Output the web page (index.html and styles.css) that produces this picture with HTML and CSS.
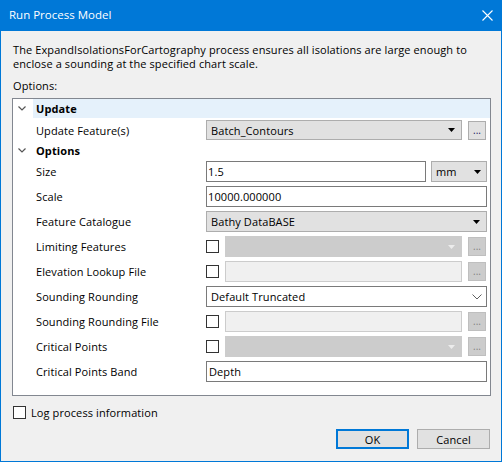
FILE: index.html
```html
<!DOCTYPE html>
<html>
<head>
<meta charset="utf-8">
<link rel="stylesheet" href="styles.css">
</head>
<body>
<div class="window">
  <div class="titlebar">
    <span class="title">Run Process Model</span>
    <svg class="close" width="11" height="11" viewBox="0 0 11 11"><path d="M0.5 0.5 L10.5 10.5 M10.5 0.5 L0.5 10.5" stroke="#fff" stroke-width="1.1" fill="none"/></svg>
  </div>
  <div class="content">
    <p class="desc">The ExpandIsolationsForCartography process ensures all isolations are large enough to<br>enclose a sounding at the specified chart scale.</p>
    <div class="options-label">Options:</div>
    <div class="grid">
      <div class="cat cat-update selected">
        <span class="gutter"><svg width="8" height="5" viewBox="0 0 8 5"><path d="M0.5 0.5 L4 4 L7.5 0.5" stroke="#555" stroke-width="1.2" fill="none"/></svg></span>
        <span class="cat-name">Update</span>
      </div>
      <div class="row row-first">
        <span class="label">Update Feature(s)</span>
        <div class="value">
          <div class="combo"><span>Batch_Contours</span><svg class="arrow" width="7" height="4" viewBox="0 0 7 4"><path d="M0 0 H7 L3.5 4 Z" fill="#000"/></svg></div>
          <div class="dots">...</div>
        </div>
      </div>
      <div class="cat cat-options">
        <span class="gutter"><svg width="8" height="5" viewBox="0 0 8 5"><path d="M0.5 0.5 L4 4 L7.5 0.5" stroke="#555" stroke-width="1.2" fill="none"/></svg></span>
        <span class="cat-name">Options</span>
      </div>
      <div class="row">
        <span class="label">Size</span>
        <div class="value gap5">
          <div class="text"><span>1.5</span></div>
          <div class="combo unit"><span>mm</span><svg class="arrow" width="7" height="4" viewBox="0 0 7 4"><path d="M0 0 H7 L3.5 4 Z" fill="#000"/></svg></div>
        </div>
      </div>
      <div class="row">
        <span class="label">Scale</span>
        <div class="value"><div class="text"><span>10000.000000</span></div></div>
      </div>
      <div class="row">
        <span class="label">Feature Catalogue</span>
        <div class="value"><div class="combo"><span>Bathy DataBASE</span><svg class="arrow" width="7" height="4" viewBox="0 0 7 4"><path d="M0 0 H7 L3.5 4 Z" fill="#000"/></svg></div></div>
      </div>
      <div class="row">
        <span class="label">Limiting Features</span>
        <div class="value">
          <span class="check"></span>
          <div class="combo disabled"><span></span><svg class="arrow" width="7" height="4" viewBox="0 0 7 4"><path d="M0 0 H7 L3.5 4 Z" fill="#ececec"/></svg></div>
          <div class="dots disabled">...</div>
        </div>
      </div>
      <div class="row">
        <span class="label">Elevation Lookup File</span>
        <div class="value">
          <span class="check"></span>
          <div class="text disabled"></div>
          <div class="dots disabled">...</div>
        </div>
      </div>
      <div class="row">
        <span class="label">Sounding Rounding</span>
        <div class="value">
          <div class="combo white"><span>Default Truncated</span><svg class="chev" width="10" height="6" viewBox="0 0 10 6"><path d="M0.5 0.5 L5 5 L9.5 0.5" stroke="#606060" stroke-width="1" fill="none"/></svg></div>
        </div>
      </div>
      <div class="row">
        <span class="label">Sounding Rounding File</span>
        <div class="value">
          <span class="check"></span>
          <div class="text disabled"></div>
          <div class="dots disabled">...</div>
        </div>
      </div>
      <div class="row">
        <span class="label">Critical Points</span>
        <div class="value">
          <span class="check"></span>
          <div class="combo disabled"><span></span><svg class="arrow" width="7" height="4" viewBox="0 0 7 4"><path d="M0 0 H7 L3.5 4 Z" fill="#ececec"/></svg></div>
          <div class="dots disabled">...</div>
        </div>
      </div>
      <div class="row">
        <span class="label">Critical Points Band</span>
        <div class="value"><div class="text"><span class="pad">Depth</span></div></div>
      </div>
    </div>
    <div class="log">
      <span class="check"></span>
      <span class="log-text">Log process information</span>
    </div>
    <div class="buttons">
      <div class="btn ok">OK</div>
      <div class="btn">Cancel</div>
    </div>
  </div>
</div>
</body>
</html>
```

FILE: styles.css
```css
* { box-sizing: border-box; }
html, body { margin: 0; padding: 0; }
body {
  font-family: "Open Sans", "Noto Sans", sans-serif;
  font-size: 11px;
  letter-spacing: 0.1px;
  color: #000;
  background: #fff;
}
.window {
  width: 502px;
  height: 462px;
  background: #f0f0f0;
  border: 1px solid #0078d7;
  border-top: none;
  display: flex;
  flex-direction: column;
}
.titlebar {
  height: 31px;
  margin: 0 -1px;
  background: #0078d7;
  color: #fff;
  display: flex;
  align-items: center;
  justify-content: space-between;
  padding: 0 9px 1px 9px;
  font-size: 11.5px;
  letter-spacing: 0;
}
.title { line-height: 16px; }
.close { margin-right: 0; margin-top: 1px; }
.content {
  padding: 0 11px;
  display: flex;
  flex-direction: column;
}
.desc {
  margin: 12px 0 0 1px;
  line-height: 14px;
  white-space: nowrap;
}
.options-label {
  margin: 8px 0 0 1px;
  line-height: 14px;
}
.grid {
  margin-top: 5px;
  width: 479px;
  height: 298px;
  background: #fff;
  border: 1px solid #828790;
  display: flex;
  flex-direction: column;
}
.cat {
  display: flex;
  align-items: center;
}
.cat-update { height: 19px; }
.cat-options { height: 17px; }
.gutter {
  width: 20px;
  height: 100%;
  display: flex;
  align-items: center;
  padding-left: 5px;
  background: #fff;
}
.cat-name {
  flex: 1;
  height: 100%;
  display: flex;
  align-items: center;
  padding-left: 3px;
  font-weight: 700;
}
.selected .cat-name { background: #e5f1fb; }
.row {
  display: flex;
  align-items: center;
  height: 25px;
  padding: 2px 3px 2px 23px;
}
.row-first { height: 24px; padding-top: 2px; padding-bottom: 2px; }
.label {
  width: 170px;
  flex: none;
  white-space: nowrap;
}
.value {
  flex: 1;
  height: 100%;
  display: flex;
  align-items: center;
  gap: 6px;
}
.value.gap5 { gap: 5px; }
.combo {
  flex: 1;
  height: 100%;
  background: #e1e1e1;
  border: 1px solid #adadad;
  display: flex;
  align-items: center;
  justify-content: space-between;
  padding: 0 6px 0 4px;
  white-space: nowrap;
}
.combo.unit { flex: none; width: 56px; padding-right: 5px; }
.combo.white {
  background: #fff;
  border-color: #7a7a7a;
  padding-right: 4px;
}
.combo.disabled {
  background: #cccccc;
  border-color: #cccccc;
}
.text {
  flex: 1;
  height: 100%;
  background: #fff;
  border: 1px solid #7a7a7a;
  display: flex;
  align-items: center;
  padding-left: 1px;
  white-space: nowrap;
}
.text .pad { padding-left: 1px; }
.text.disabled {
  background: #f0f0f0;
  border-color: #cccccc;
}
.dots {
  flex: none;
  width: 18px;
  height: 19px;
  margin-right: 1px;
  background: #e1e1e1;
  border: 1px solid #adadad;
  display: flex;
  align-items: flex-end;
  justify-content: center;
  line-height: 12px;
  padding-bottom: 3px;
  font-size: 10px;
  letter-spacing: 0;
  color: #1a1a60;
}
.dots.disabled {
  background: #cccccc;
  border-color: #bfbfbf;
  color: #838383;
}
.check {
  flex: none;
  width: 13px;
  height: 13px;
  background: #fff;
  border: 1px solid #333;
}
.log {
  margin-top: 10px;
  height: 13px;
  display: flex;
  align-items: center;
  gap: 5px;
  padding-left: 1px;
}
.log-text { line-height: 13px; }
.buttons {
  margin-top: 10px;
  display: flex;
  justify-content: flex-end;
  gap: 8px;
  padding-right: 0;
}
.btn {
  width: 73px;
  height: 20px;
  background: #e1e1e1;
  border: 1px solid #adadad;
  display: flex;
  align-items: center;
  justify-content: center;
}
.btn.ok { border: 2px solid #0078d7; }
```
